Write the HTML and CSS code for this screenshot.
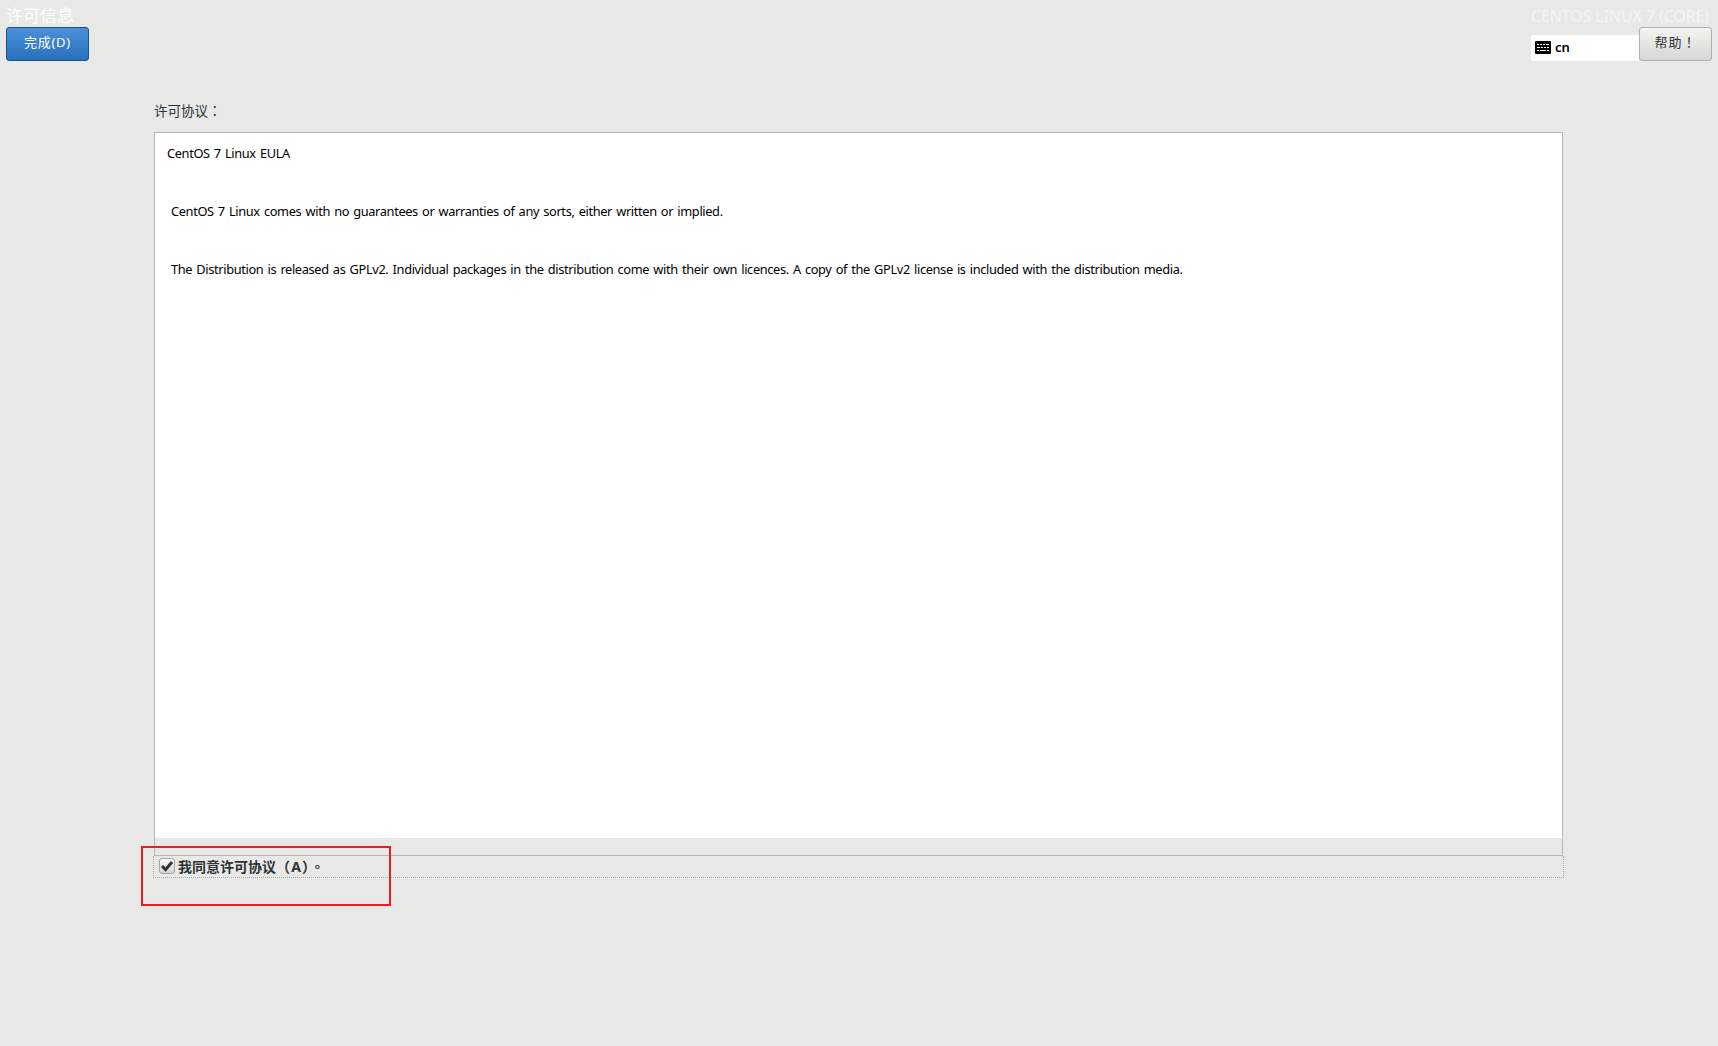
FILE: index.html
```html
<!DOCTYPE html>
<html>
<head>
<meta charset="utf-8">
<title>许可信息</title>
<link rel="stylesheet" href="styles.css">
</head>
<body>
<header class="topbar">
  <div class="spoke">
    <h1 class="spoke-title">许可信息</h1>
    <button class="btn btn-done" type="button">完成(D)</button>
  </div>
  <div class="product">
    <div class="product-name">CENTOS LINUX 7 (CORE)</div>
    <div class="product-tools">
      <div class="layout-indicator">
        <svg class="kbd-icon" viewBox="0 0 16 13" width="16" height="13" aria-hidden="true">
          <path fill="#000" fill-rule="evenodd" d="M1 0h14a1 1 0 0 1 1 1v11a1 1 0 0 1-1 1H1a1 1 0 0 1-1-1V1a1 1 0 0 1 1-1zM2 3v1h2V3zm3 0v1h2V3zm3 0v1h2V3zm3 0v1h3V3zM2 6v1h3V6zm4 0v1h2V6zm3 0v1h2V6zm3 0v1h2V6zM2 9v1h2V9zm3 0v1h6V9zm7 0v1h2V9z"/>
        </svg>
        <span class="layout-name">cn</span>
      </div>
      <button class="btn btn-help" type="button">帮助！</button>
    </div>
  </div>
</header>
<main class="content">
  <div class="license-label">许可协议：</div>
  <section class="license-box">
    <div class="license-text">
      <p class="eula-title">CentOS 7 Linux EULA</p>
      <p class="eula-para">CentOS 7 Linux comes with no guarantees or warranties of any sorts, either written or implied.</p>
      <p class="eula-para">The Distribution is released as GPLv2. Individual packages in the distribution come with their own licences. A copy of the GPLv2 license is included with the distribution media.</p>
    </div>
    <div class="license-scroll"></div>
  </section>
  <label class="accept-row">
    <span class="checkbox">
      <svg viewBox="0 0 14 14" width="14" height="14" aria-hidden="true">
        <path d="M2 7 5.6 10.6 12 3" fill="none" stroke="#2e3436" stroke-width="3"/>
      </svg>
    </span>
    <span class="accept-text">我同意许可协议<span class="accept-key">（A）。</span></span>
  </label>
</main>
<div class="annotation"></div>
</body>
</html>
```
FILE: styles.css
```css
* { box-sizing: border-box; }
html, body { height: 100%; }
body {
  margin: 0;
  background: #e8e8e6;
  color: #2e3436;
  font-family: "Noto Sans", "Noto Sans CJK TC", sans-serif;
  font-size: 13px;
  overflow: hidden;
  position: relative;
}
.topbar {
  display: flex;
  justify-content: space-between;
  padding: 7px 6px 0;
  height: 61px;
}
.spoke, .product { display: flex; flex-direction: column; }
.spoke-title {
  margin: 0;
  height: 20px;
  font-size: 17px;
  font-weight: 400;
  line-height: 18px;
  color: #fff;
}
.btn {
  height: 34px;
  border-radius: 3px;
  font: inherit;
  padding: 0 0 5px;
  margin: 0;
}
.btn-done {
  width: 83px;
  border: 1px solid #1c5187;
  color: #fff;
  letter-spacing: 0.7px;
  background: linear-gradient(#4a90d9, #2a6fbc);
}
.product { width: 181px; }
.product-name {
  height: 20px;
  line-height: 18px;
  font-size: 15.8px;
  color: #f4f4f3;
  white-space: nowrap;
  text-align: right;
  padding-right: 3px;
}
.product-tools { display: flex; align-items: flex-end; height: 34px; }
.layout-indicator {
  width: 108px;
  height: 26px;
  background: #fff;
  display: flex;
  align-items: center;
  gap: 4px;
  padding: 0 0 2px 4px;
  color: #000;
}
.layout-name { font-weight: 600; font-size: 13px; }
.btn-help {
  width: 73px;
  flex: none;
  border: 1px solid #b0b0ac;
  color: #2e3436;
  letter-spacing: 1px;
  background: linear-gradient(#f4f4f3, #d6d6d3);
}
.content {
  padding: 41px 154px 0 153px;
}
.license-label {
  height: 30px;
  margin-left: 1px;
  line-height: 18px;
  font-size: 13.5px;
}
.license-box {
  margin-left: 1px;
  margin-right: 1px;
  height: 724px;
  border: 1px solid #b6b6b3;
  display: flex;
  flex-direction: column;
}
.license-text {
  flex: 1;
  background: #fff;
  color: #000;
  padding: 11px 12px 0;
  font-size: 12.8px;
  letter-spacing: -0.36px;
  word-spacing: 1.2px;
}
.license-text p { margin: 0; line-height: 18px; }
.eula-title { height: 58px; }
.eula-para { height: 58px; padding-left: 4px; }
.license-scroll { height: 17px; background: #e8e8e6; }
.accept-row {
  display: flex;
  align-items: center;
  gap: 3px;
  height: 22px;
  border-right: 1px dotted #aaa;
  border-bottom: 1px dotted #aaa;
  border-left: 1px dotted #aaa;
  padding: 0 0 2px 5px;
}
.checkbox {
  width: 16px;
  height: 16px;
  flex: none;
  display: flex;
  align-items: center;
  justify-content: center;
  border: 1px solid #a4a4a0;
  border-radius: 3px;
  background: linear-gradient(#fafafa, #d4d4d1);
}
.accept-text { font-weight: 700; font-size: 14px; }
.accept-key { letter-spacing: 1.2px; }
.annotation {
  position: absolute;
  left: 141px;
  top: 846px;
  width: 250px;
  height: 60px;
  border: 2px solid #ed1c24;
}
```
